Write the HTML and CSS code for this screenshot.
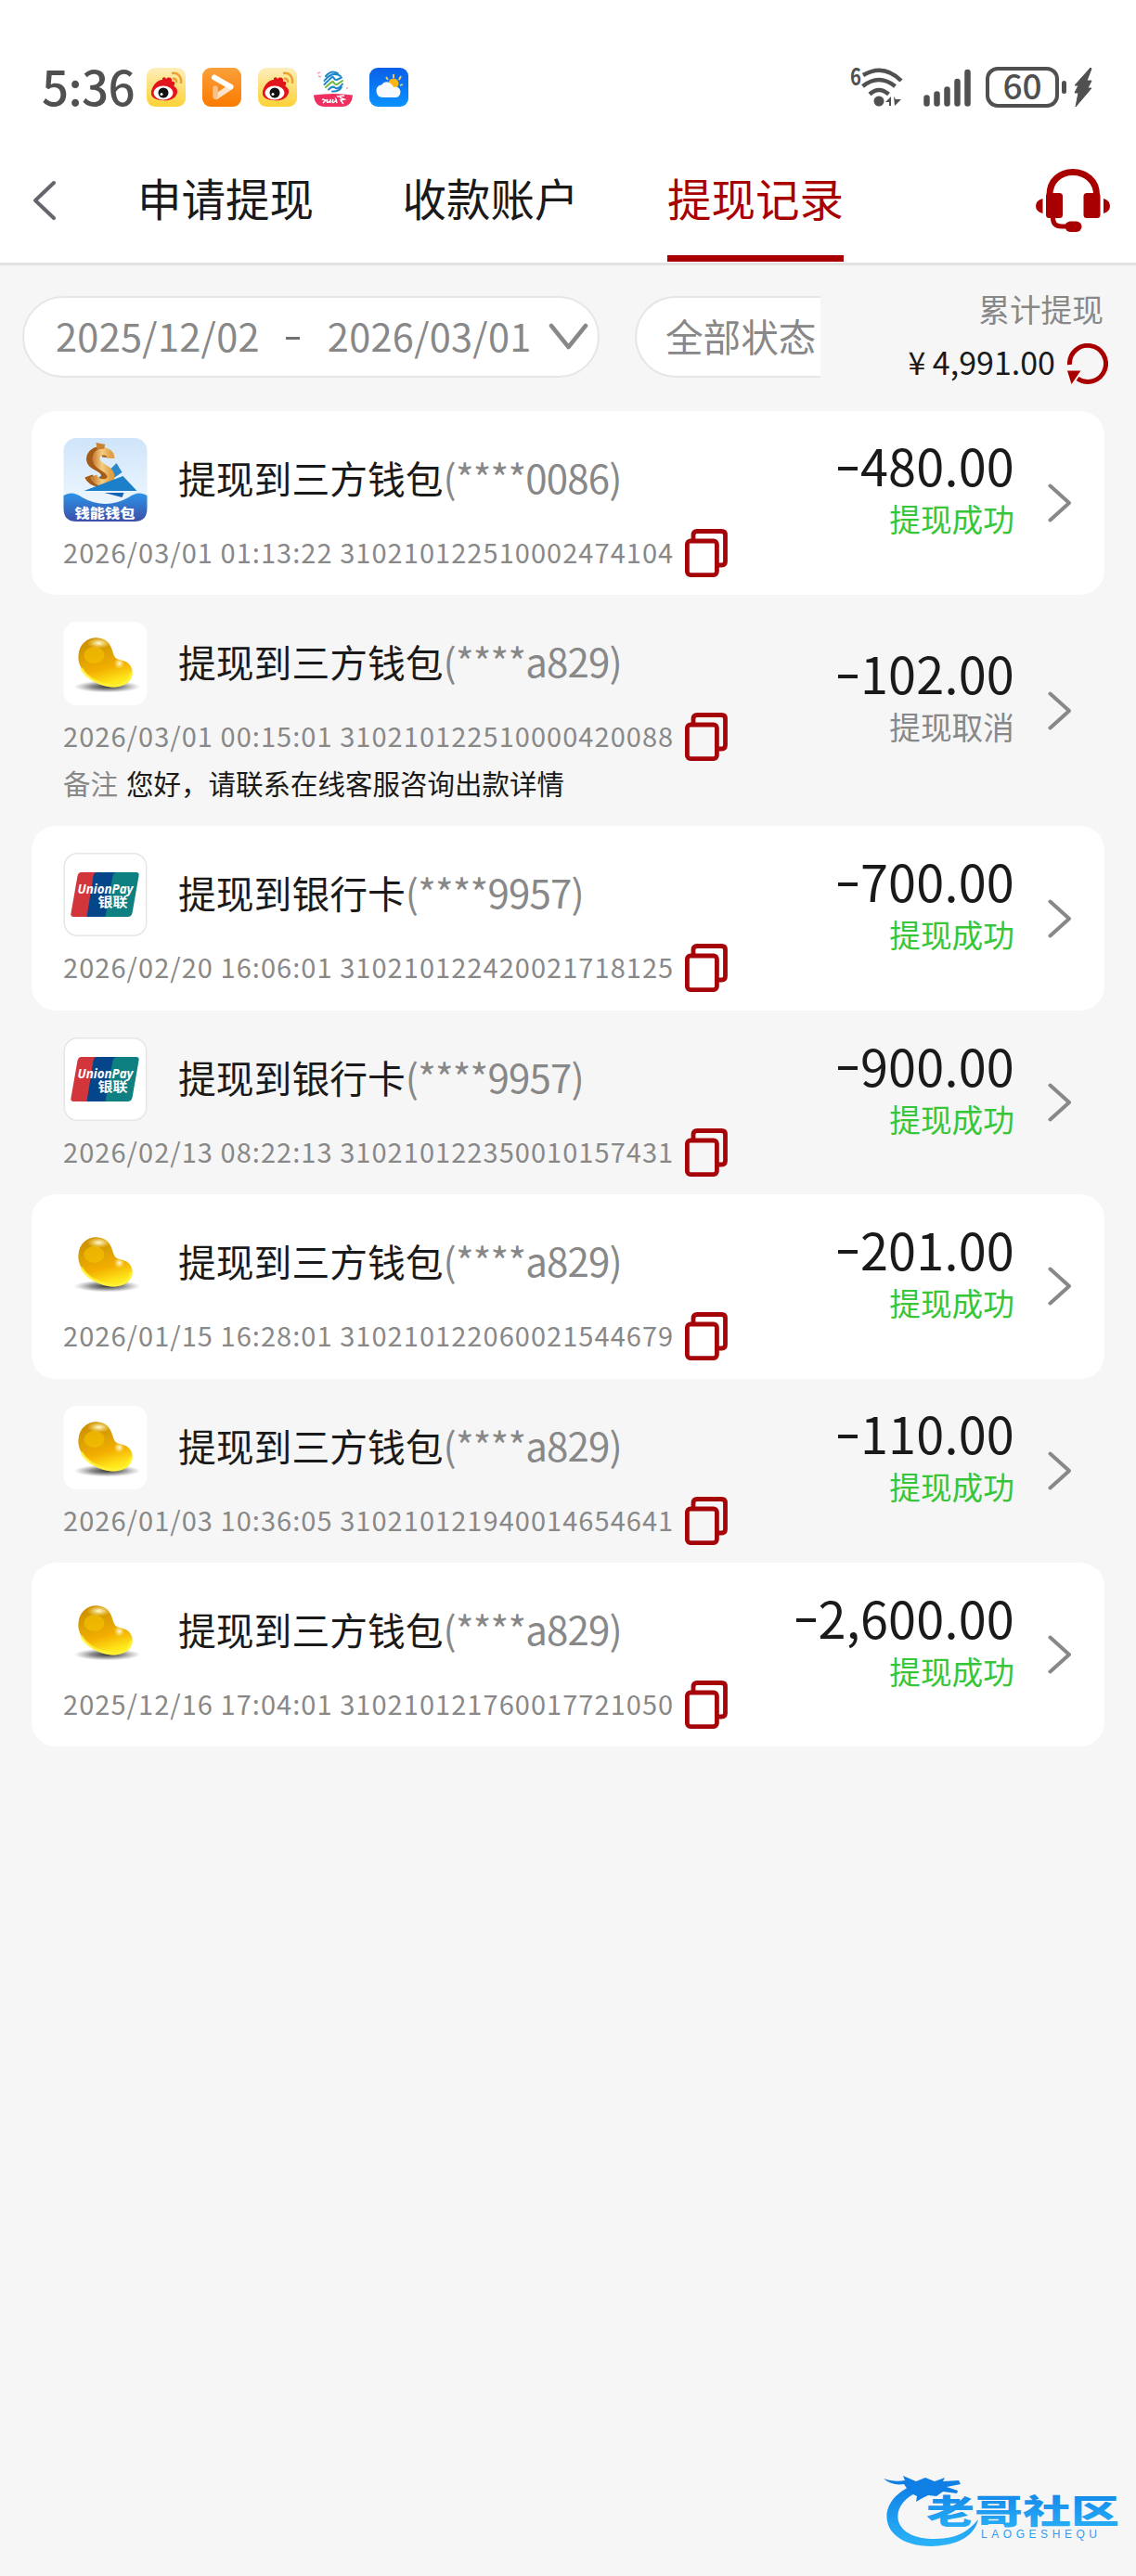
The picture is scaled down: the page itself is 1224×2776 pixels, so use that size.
FILE: index.html
```html
<!DOCTYPE html>
<html lang="zh-CN">
<head>
    <meta charset="UTF-8">
    <meta name="viewport" content="width=device-width, initial-scale=1.0">
    <title>提现记录</title>
    <link rel="stylesheet" href="styles.css">
</head>
<body>
    <!-- shared icons -->
    <svg class="sprite" width="0" height="0">
        <defs>
            <linearGradient id="gold" x1="0" y1="0" x2="0.3" y2="1">
                <stop offset="0" stop-color="#c98a00"/>
                <stop offset="0.4" stop-color="#dca000"/>
                <stop offset="0.7" stop-color="#f3ae00"/>
                <stop offset="1" stop-color="#ffe81c"/>
            </linearGradient>
            <radialGradient id="shine">
                <stop offset="0" stop-color="#fffde0"/>
                <stop offset="1" stop-color="#ffe97a" stop-opacity="0"/>
            </radialGradient>
            <radialGradient id="shade">
                <stop offset="0" stop-color="#333"/>
                <stop offset="0.5" stop-color="#777" stop-opacity="0.8"/>
                <stop offset="1" stop-color="#999" stop-opacity="0"/>
            </radialGradient>
            <linearGradient id="sky" x1="0" y1="0" x2="0" y2="1">
                <stop offset="0" stop-color="#cfe4fa"/>
                <stop offset="1" stop-color="#f6fbff"/>
            </linearGradient>
            <linearGradient id="wave" x1="0" y1="0" x2="0" y2="1">
                <stop offset="0" stop-color="#2b93e8"/>
                <stop offset="1" stop-color="#3d4fa8"/>
            </linearGradient>
            <linearGradient id="coin" x1="0" y1="0" x2="1" y2="0">
                <stop offset="0" stop-color="#c98236"/>
                <stop offset="0.5" stop-color="#f6cd80"/>
                <stop offset="1" stop-color="#dfa048"/>
            </linearGradient>
            <linearGradient id="weibo-bg" x1="0" y1="0" x2="0" y2="1">
                <stop offset="0" stop-color="#fdeebb"/>
                <stop offset="1" stop-color="#fdd235"/>
            </linearGradient>
            <linearGradient id="video-bg" x1="0" y1="0" x2="0" y2="1">
                <stop offset="0" stop-color="#fba03a"/>
                <stop offset="1" stop-color="#fa7a00"/>
            </linearGradient>
            <linearGradient id="weather-bg" x1="0" y1="0" x2="0" y2="1">
                <stop offset="0" stop-color="#0a5fe8"/>
                <stop offset="1" stop-color="#0a93ff"/>
            </linearGradient>
            <linearGradient id="dragon" x1="0" y1="0" x2="0" y2="1">
                <stop offset="0" stop-color="#0f7fe6"/>
                <stop offset="1" stop-color="#2bb4f8"/>
            </linearGradient>
        </defs>

        <symbol id="weibo" viewBox="0 0 42 42">
            <rect width="42" height="42" rx="9" fill="url(#weibo-bg)"/>
            <path d="M5 28C4 21 12 12 17 13C19 14 18 16 19 17C22 14 28 14 27 19C31 20 34 23 33 27C31 34 24 36 17 35C10 35 5 32 5 28Z" fill="#e3151c"/>
            <path d="M17 13C16 10 20 9 21 12C24 9 28 11 27 15C31 14 31 18 29 20L16 20Z" fill="#e3151c"/>
            <ellipse cx="18" cy="27" rx="10.500" ry="7.500" fill="#fff"/>
            <circle cx="18" cy="27" r="5.500" fill="#111"/>
            <circle cx="16" cy="28.500" r="1.500" fill="#fff"/>
            <path d="M27 6C34 5 38 10 37 17M28 12C31 11 32.500 13 32 16" fill="none" stroke="#e9a233" stroke-width="2.500"/>
        </symbol>

        <symbol id="bean" viewBox="0 0 90 90">
            <rect width="90" height="90" rx="14" fill="#fff"/>
            <ellipse cx="47" cy="70" rx="36" ry="6.500" fill="url(#shade)"/>
            <path d="M16 36C17 20 33 13 45 20C53 25 52 34 56 39C60 42 67 41 71 46C77 53 74 64 65 68C52 74 36 68 27 59C19 52 15 44 16 36Z" fill="url(#gold)"/>
            <path d="M19 50C25 61 40 69 55 69C64 68 72 64 73 55" fill="none" stroke="#fff23a" stroke-width="3" opacity="0.8"/>
            <ellipse cx="33" cy="36" rx="11" ry="9" fill="#f6c400" opacity="0.6"/>
            <ellipse cx="38" cy="23" rx="13" ry="6" fill="url(#shine)"/>
            <ellipse cx="60" cy="45" rx="6" ry="6" fill="url(#shine)"/>
        </symbol>

        <symbol id="unionpay" viewBox="0 0 90 90">
            <rect x="0.750" y="0.750" width="88.500" height="88.500" rx="14" fill="#fff" stroke="#e6e6e6" stroke-width="1.500"/>
            <path d="M19 21H36L27 69H11Q7 69 8 65L15 25Q16 21 19 21Z" fill="#d3363a"/>
            <path d="M36 21H59L49 69H25L32 25Q33 21 36 21Z" fill="#05468a"/>
            <path d="M58 21H78Q82 21 81 25L74 65Q73 69 69 69H45L53 25Q54 21 58 21Z" fill="#0f8081"/>
            <text x="15" y="44" class="union-en" textLength="60" lengthAdjust="spacingAndGlyphs">UnionPay</text>
            <text x="37" y="58" class="union-cn" textLength="32" lengthAdjust="spacingAndGlyphs">银联</text>
        </symbol>

        <symbol id="copy" viewBox="0 0 46 52">
            <path d="M9 11V6.500Q9 2.500 13 2.500H39.500Q43.500 2.500 43.500 6.500V35Q43.500 39 39.500 39H36" fill="none" stroke="#a50508" stroke-width="4.800"/>
            <rect x="2.400" y="13" width="32" height="36.600" rx="3.500" fill="none" stroke="#a50508" stroke-width="4.800"/>
        </symbol>

        <symbol id="arrow" viewBox="0 0 26 42">
            <path d="M2.500 2.500L23 21L2.500 39.500" fill="none" stroke="#888" stroke-width="4" stroke-linecap="round" stroke-linejoin="round"/>
        </symbol>
    </svg>

    <div class="status-bar">
        <span class="time">5:36</span>
        <div class="apps">
            <svg width="42" height="42"><use href="#weibo"/></svg>
            <svg width="42" height="42" viewBox="0 0 42 42">
                <rect width="42" height="42" rx="9" fill="url(#video-bg)"/>
                <path d="M30 21L15 31" stroke="#fde3c8" stroke-width="6" stroke-linecap="round"/>
                <path d="M14 22V31" stroke="#fbc08a" stroke-width="5.500" stroke-linecap="round"/>
                <path d="M13 10.500L30.500 20.500" stroke="#fff" stroke-width="6" stroke-linecap="round"/>
            </svg>
            <svg width="42" height="42"><use href="#weibo"/></svg>
            <svg width="42" height="42" viewBox="0 0 42 42">
                <g fill="none" stroke-width="2" stroke-linecap="round">
                    <path d="M13 9Q19 2 26 6M11.500 14Q20 3 29 9" stroke="#1f86c8"/>
                    <path d="M11.500 18L19 10.500Q21 9.500 22 11.500T25 13L30 10.500" stroke="#1f86c8"/>
                    <path d="M13 21L19 15.500Q21 14.500 22 16.500T25 18L31 14" stroke="#6fb83f"/>
                    <path d="M16 23.500Q20 19 23 21.500T31 17.500M20 25.500Q27 26 30 21" stroke="#1f86c8"/>
                </g>
                <path d="M4 6l3-1M5 9l3 1M35 22h2" stroke="#f7a0b5" stroke-width="1.500"/>
                <path d="M0 29.500Q21 26.500 42 29.500Q41 42 30 42H12Q1 42 0 29.500Z" fill="#ef2f60"/>
                <path d="M9 34l4 1-3 3M15 34q-2 4 1 3t2-3v4M21 34q-2 5 1 3t2-3l1 4M28 32l5 2-4 1 3 4M25 31l8-1" fill="none" stroke="#fff" stroke-width="1.500"/>
            </svg>
            <svg width="42" height="42" viewBox="0 0 42 42">
                <rect width="42" height="42" rx="9" fill="url(#weather-bg)"/>
                <path d="M26 7v4M18 10l2 3M34 9l-2 4M36 18l-3 1" stroke="#fbd45a" stroke-width="1.800"/>
                <circle cx="26" cy="17" r="5.500" fill="#fcb614"/>
                <path d="M14 32Q7 31 7.500 24Q8 19 13 18.500Q17 13 23 17Q26 20 26 21Q33 20 33.500 26Q33 32 28 32Z" fill="#f6faff"/>
            </svg>
        </div>
        <div class="signals">
            <svg width="57" height="44" viewBox="0 0 57 44">
                <text x="0" y="19.500" class="wifi-gen" textLength="12" lengthAdjust="spacingAndGlyphs">6</text>
                <g fill="none" stroke="#505050" stroke-width="4.500">
                    <path d="M14 9Q36-4 55 15"/>
                    <path d="M13.500 21Q31 7 48.500 21"/>
                    <path d="M21 29.500Q31 20.500 41.500 29.500"/>
                </g>
                <circle cx="31" cy="37" r="5.500" fill="#505050"/>
                <path d="M38 38l6-6v10h-2v-4zM47 32l2 3h6l-7 7z" fill="#505050"/>
            </svg>
            <svg class="cell" width="51" height="41" viewBox="0 0 51 41">
                <path d="M3.500 31.500V37.500M14.500 27.500V37.500M25.500 22.500V37.500M36.500 14V37.500M47.500 4V37.500" stroke="#505050" stroke-width="6.500" stroke-linecap="round"/>
            </svg>
            <div class="battery">60</div>
            <i class="battery-tip"></i>
            <svg width="20" height="44" viewBox="0 0 20 44">
                <path d="M18 1L1 20H5L1 28H5L2 43L19 23H15L19 15H14L19 2Z" fill="#505050" stroke="#505050" stroke-linejoin="round"/>
            </svg>
        </div>
    </div>

    <header>
        <svg class="back" width="27" height="44" viewBox="0 0 27 44">
            <path d="M24 3L4 22L24 41" fill="none" stroke="#66646c" stroke-width="4" stroke-linecap="round" stroke-linejoin="round"/>
        </svg>
        <nav>
            <a>申请提现</a>
            <a>收款账户</a>
            <a class="active">提现记录</a>
        </nav>
        <svg class="service" width="80" height="68" viewBox="0 0 80 68">
            <path d="M15 31V28C15 13 26 3.500 40 3.500S65.500 13 65.500 28V31" fill="none" stroke="#a80000" stroke-width="7"/>
            <rect x="11" y="26" width="18" height="27" rx="3.500" fill="#a80000"/>
            <rect x="51.500" y="26" width="18" height="27" rx="3.500" fill="#a80000"/>
            <path d="M7.500 32V48Q0 46 0 40T7.500 32ZM73 32V48Q80 46 80 40T73 32Z" fill="#a80000"/>
            <path d="M18.500 52Q18 62 28 62H36" fill="none" stroke="#a80000" stroke-width="5"/>
            <rect x="31.500" y="56.500" width="18" height="11.500" rx="5.750" fill="#a80000"/>
        </svg>
    </header>

    <section class="filter">
        <div class="pill date">
            <span>2025/12/02</span>
            <i class="dash"></i>
            <span>2026/03/01</span>
            <svg width="43" height="29" viewBox="0 0 43 29">
                <path d="M3 3L21.500 26L40 3" fill="none" stroke="#888" stroke-width="4.500" stroke-linecap="round" stroke-linejoin="round"/>
            </svg>
        </div>
        <div class="pill state">全部状态</div>
        <div class="total">
            <p>累计提现</p>
            <div class="sum">
                <span>¥ 4,991.00</span>
                <svg width="44" height="44" viewBox="0 0 44 44">
                    <path d="M2.500 23A19.500 19.500 0 1 1 11 38" fill="none" stroke="#a80000" stroke-width="5"/>
                    <path d="M0 29.500H14.500L4.500 44Z" fill="#a80000"/>
                </svg>
            </div>
        </div>
    </section>

    <section class="records">
        <div class="record">
            <div class="info">
                <div class="title">
                    <svg width="91" height="90" viewBox="0 0 90 90">
                        <rect width="90" height="90" rx="14" fill="url(#sky)"/>
                        <path d="M52 32L57 27L63 37L50 46L36 44Z" fill="#2a88cc"/>
                        <path d="M46 21C47 10 29 12 29 23C30 32 46 31 45 41C44 51 30 49 27 41" fill="none" stroke="#a55b18" stroke-width="9"/>
                        <path d="M51 22C51 12 35 12 35 23C36 32 51 32 51 42C50 51 36 50 32 41" fill="none" stroke="url(#coin)" stroke-width="8"/>
                        <path d="M35 5L45 7L43 12H36Z" fill="#c98432"/>
                        <path d="M22 57L64 41L79 57Z" fill="#1b7fca"/>
                        <path d="M44 59H65L63 64Z" fill="#1265b5"/>
                        <path d="M0 62Q9 56 20 64Q45 78 70 64Q81 56 90 62V76Q90 90 76 90H14Q0 90 0 76Z" fill="url(#wave)"/>
                        <text x="12" y="85.500" class="wallet-name" textLength="65" lengthAdjust="spacingAndGlyphs">钱能钱包</text>
                    </svg>
                    <h3>提现到三方钱包<span>(****0086)</span></h3>
                </div>
                <div class="order">
                    <span>2026/03/01 01:13:22 310210122510002474104</span>
                    <svg width="46" height="52"><use href="#copy"/></svg>
                </div>
            </div>
            <div class="amount">
                <strong><i></i>480.00</strong>
                <em>提现成功</em>
            </div>
            <svg width="26" height="42"><use href="#arrow"/></svg>
        </div>

        <div class="record">
            <div class="info">
                <div class="title">
                    <svg width="91" height="90"><use href="#bean"/></svg>
                    <h3>提现到三方钱包<span>(****a829)</span></h3>
                </div>
                <div class="order">
                    <span>2026/03/01 00:15:01 310210122510000420088</span>
                    <svg width="46" height="52"><use href="#copy"/></svg>
                </div>
                <p class="remark"><span>备注</span>您好，请联系在线客服咨询出款详情</p>
            </div>
            <div class="amount">
                <strong><i></i>102.00</strong>
                <em class="cancel">提现取消</em>
            </div>
            <svg width="26" height="42"><use href="#arrow"/></svg>
        </div>

        <div class="record">
            <div class="info">
                <div class="title">
                    <svg width="91" height="90"><use href="#unionpay"/></svg>
                    <h3>提现到银行卡<span>(****9957)</span></h3>
                </div>
                <div class="order">
                    <span>2026/02/20 16:06:01 310210122420021718125</span>
                    <svg width="46" height="52"><use href="#copy"/></svg>
                </div>
            </div>
            <div class="amount">
                <strong><i></i>700.00</strong>
                <em>提现成功</em>
            </div>
            <svg width="26" height="42"><use href="#arrow"/></svg>
        </div>

        <div class="record">
            <div class="info">
                <div class="title">
                    <svg width="91" height="90"><use href="#unionpay"/></svg>
                    <h3>提现到银行卡<span>(****9957)</span></h3>
                </div>
                <div class="order">
                    <span>2026/02/13 08:22:13 310210122350010157431</span>
                    <svg width="46" height="52"><use href="#copy"/></svg>
                </div>
            </div>
            <div class="amount">
                <strong><i></i>900.00</strong>
                <em>提现成功</em>
            </div>
            <svg width="26" height="42"><use href="#arrow"/></svg>
        </div>

        <div class="record">
            <div class="info">
                <div class="title">
                    <svg width="91" height="90"><use href="#bean"/></svg>
                    <h3>提现到三方钱包<span>(****a829)</span></h3>
                </div>
                <div class="order">
                    <span>2026/01/15 16:28:01 310210122060021544679</span>
                    <svg width="46" height="52"><use href="#copy"/></svg>
                </div>
            </div>
            <div class="amount">
                <strong><i></i>201.00</strong>
                <em>提现成功</em>
            </div>
            <svg width="26" height="42"><use href="#arrow"/></svg>
        </div>

        <div class="record">
            <div class="info">
                <div class="title">
                    <svg width="91" height="90"><use href="#bean"/></svg>
                    <h3>提现到三方钱包<span>(****a829)</span></h3>
                </div>
                <div class="order">
                    <span>2026/01/03 10:36:05 310210121940014654641</span>
                    <svg width="46" height="52"><use href="#copy"/></svg>
                </div>
            </div>
            <div class="amount">
                <strong><i></i>110.00</strong>
                <em>提现成功</em>
            </div>
            <svg width="26" height="42"><use href="#arrow"/></svg>
        </div>

        <div class="record">
            <div class="info">
                <div class="title">
                    <svg width="91" height="90"><use href="#bean"/></svg>
                    <h3>提现到三方钱包<span>(****a829)</span></h3>
                </div>
                <div class="order">
                    <span>2025/12/16 17:04:01 310210121760017721050</span>
                    <svg width="46" height="52"><use href="#copy"/></svg>
                </div>
            </div>
            <div class="amount">
                <strong><i></i>2,600.00</strong>
                <em>提现成功</em>
            </div>
            <svg width="26" height="42"><use href="#arrow"/></svg>
        </div>
    </section>

    <footer>
        <svg width="254" height="80" viewBox="0 0 254 80">
            <path d="M33 12C-10 27-8 78 52 78C80 77 98 67 102 49C90 64 76 70 55 70C6 70 5 32 38 19Z" fill="url(#dragon)"/>
            <path d="M0 5Q10 9 23 7L21 2L35 8L45 4L55 8L66 4L64 8L81 7L83 11L68 14L80 18L79 21L64 19L57 24L48 23L42 26L35 30L36 24L28 20L22 11Q9 13 0 5Z" fill="#0f7fe6"/>
            <text x="46" y="54" class="brand" textLength="208" lengthAdjust="spacingAndGlyphs">老哥社区</text>
            <text x="105" y="69" class="brand-en" textLength="125">LAOGESHEQU</text>
        </svg>
    </footer>
</body>
</html>
```
FILE: styles.css
```css
* {
    box-sizing: border-box;
}

body {
    font-family: "Noto Sans CJK SC", sans-serif;
    margin: 0;
    padding: 0;
    min-height: 2776px;
    display: flex;
    flex-direction: column;
    background-color: #f6f6f6;
    color: #1a1a1a;
}

svg {
    display: block;
    flex-shrink: 0;
}

.sprite {
    position: absolute;
}

p,
h3 {
    margin: 0;
    font-weight: normal;
}

i,
em {
    font-style: normal;
}

/* status bar */
.status-bar {
    height: 148px;
    padding: 40px 47px 0 45px;
    display: flex;
    align-items: center;
    background-color: #fff;
    color: #505050;
}

.time {
    width: 113px;
    margin-top: -4px;
    font-size: 51px;
    line-height: 60px;
    font-weight: 500;
    letter-spacing: -0.6px;
}

.apps {
    display: flex;
    gap: 18px;
}

.signals {
    margin-left: auto;
    display: flex;
    align-items: center;
}

.cell {
    margin: 0 16px 0 22px;
}

.wifi-gen {
    font-size: 25px;
    font-weight: 700;
    fill: #505050;
}

.battery {
    width: 79px;
    height: 44px;
    border: 4px solid #505050;
    border-radius: 13px;
    font-size: 37px;
    line-height: 31px;
    font-weight: 500;
    text-align: center;
}

.battery-tip {
    width: 5px;
    height: 14px;
    margin: 0 8px 0 3px;
    border-radius: 3px;
    background-color: #505050;
}

/* header */
header {
    height: 138px;
    padding: 0 28px 0 34px;
    display: flex;
    align-items: center;
    background-color: #fff;
    border-bottom: 3px solid #e2e2e2;
}

nav {
    height: 135px;
    margin-left: 87px;
    display: flex;
    gap: 95.5px;
}

nav a {
    width: 190px;
    height: 134px;
    font-size: 47.5px;
    line-height: 130px;
    white-space: nowrap;
}

nav a.active {
    color: #a80000;
    border-bottom: 7px solid #a80000;
}

.service {
    margin-left: auto;
}

/* filter */
.filter {
    height: 156.5px;
    padding: 33px 30px 0 24px;
    display: flex;
    align-items: flex-start;
}

.pill {
    height: 88px;
    padding-bottom: 4px;
    display: flex;
    align-items: center;
    background-color: #fff;
    border: 2px solid #e6e6e6;
    border-radius: 44px;
    color: #888;
    font-size: 41.5px;
    white-space: nowrap;
}

.date {
    width: 622px;
    padding-left: 34px;
    letter-spacing: 0.3px;
}

.date svg {
    margin: 3px 0 0 18px;
}

.dash {
    width: 15px;
    height: 3px;
    margin: 6px 30px 0 28px;
    background-color: #707070;
}

.state {
    width: 200px;
    margin-left: 38px;
    padding-left: 31px;
    border-right: none;
    border-radius: 44px 0 0 44px;
    font-size: 40.6px;
}

.total {
    margin-left: auto;
    text-align: right;
}

.total p {
    margin: -9px 5px 0 0;
    color: #888;
    font-size: 33.7px;
    line-height: 46px;
}

.sum {
    margin-top: 14px;
    display: flex;
    align-items: center;
    justify-content: flex-end;
    gap: 13px;
    font-size: 34px;
    line-height: 44px;
}

.sum span {
    margin-top: -4px;
}

/* records */
.records {
    padding: 0 34px;
}

.record {
    height: 198.4px;
    padding: 29px 35px 0 34px;
    display: flex;
    border-radius: 26px;
}

.record:nth-child(odd) {
    background-color: #fff;
}

.record:nth-child(2) {
    height: 249.6px;
}

.title {
    height: 90px;
    display: flex;
    align-items: center;
    gap: 33px;
}

.title h3 {
    margin-top: -5px;
    font-size: 40.8px;
    line-height: 60px;
    white-space: nowrap;
}

.title h3 span {
    color: #888;
    font-size: 42px;
    letter-spacing: -0.8px;
}

.order {
    height: 52px;
    margin-top: 8px;
    display: flex;
    align-items: center;
    gap: 12px;
    color: #888;
    font-size: 29px;
    letter-spacing: 1.05px;
    white-space: nowrap;
}

.order span {
    margin-top: -4px;
}

.remark {
    margin-top: 1px;
    font-size: 29.5px;
    line-height: 44px;
    white-space: nowrap;
}

.remark span {
    margin-right: 9px;
    color: #888;
}

.amount {
    flex: 1;
    align-self: center;
    margin: -57px 36px 0 0;
    display: flex;
    flex-direction: column;
    align-items: flex-end;
}

.amount strong {
    margin-bottom: 2px;
    display: flex;
    align-items: center;
    font-size: 54px;
    font-weight: 400;
    line-height: 61px;
    letter-spacing: 0.2px;
}

.amount strong i {
    width: 21px;
    height: 4px;
    margin: 8px 3px 0 0;
    background-color: #1a1a1a;
}

.amount em {
    color: #37c63a;
    font-size: 33.7px;
    line-height: 52px;
}

.amount .cancel {
    color: #888;
}

.record > svg {
    align-self: center;
    margin-top: -29px;
}

.union-en {
    font-family: "Open Sans", sans-serif;
    font-size: 15px;
    font-style: italic;
    font-weight: 700;
    fill: #fff;
}

.union-cn {
    font-size: 14px;
    font-weight: 700;
    fill: #fff;
}

.wallet-name {
    font-size: 13.5px;
    font-weight: 900;
    fill: #fff;
}

/* bottom brand */
footer {
    margin-top: auto;
    padding: 0 18px 30px;
    display: flex;
    justify-content: flex-end;
}

.brand {
    font-size: 36px;
    font-weight: 900;
    fill: url(#dragon);
}

.brand-en {
    font-family: "Liberation Sans", sans-serif;
    font-size: 12px;
    fill: #2f9df0;
}
```
